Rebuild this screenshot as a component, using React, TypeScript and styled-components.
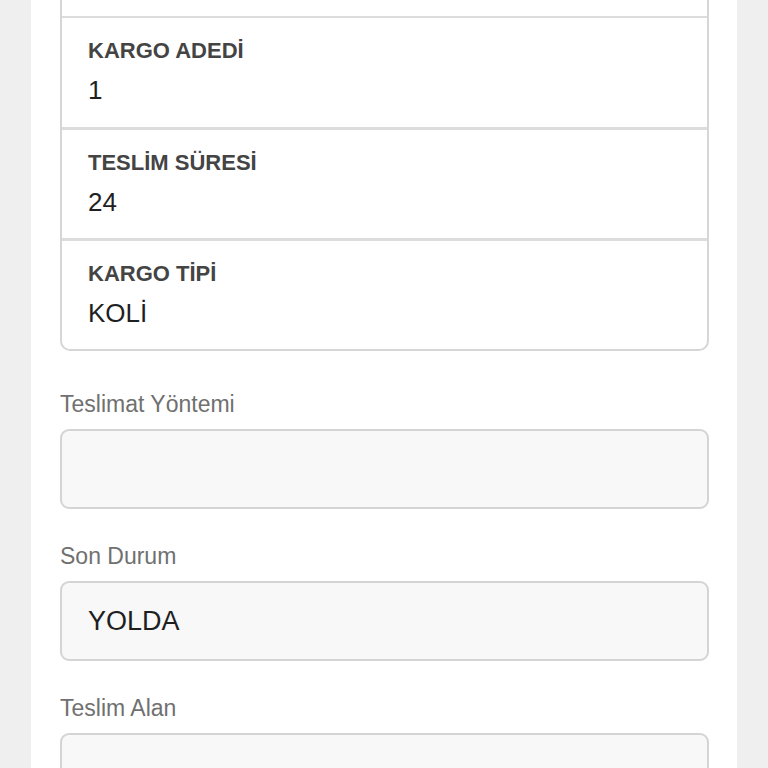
import React from "react";
import styled, { createGlobalStyle } from "styled-components";

const GlobalStyle = createGlobalStyle`
    html, body {
        margin: 0;
        padding: 0;
        background: #efefef;
        font-family: "Liberation Sans", Arial, Helvetica, sans-serif;
    }
`;

const Page = styled.div`
    margin: 0 31px;
    min-height: 768px;
    background: #ffffff;
    padding: 0 28px 0 29px;
    overflow: hidden;
`;

// the view is scrolled so that the first row of the card sits above the top edge
const Scrolled = styled.div`
    margin-top: -97px;
`;

const InfoCard = styled.div`
    border: 2px solid #d6d6d6;
    border-radius: 10px;
    background: #ffffff;
    overflow: hidden;
    margin-bottom: 40px;
`;

const InfoRow = styled.div<{ $sep: number }>`
    display: flex;
    flex-direction: column;
    gap: 11px;
    height: 111px;
    box-sizing: border-box;
    padding: 20px 26px 0;
    border-top: ${(p) => p.$sep}px solid #dcdcdc;

    &:first-child {
        border-top: none;
    }

    .info-label {
        font-size: 22px;
        font-weight: 700;
        color: #444444;
        line-height: 26px;
    }

    .info-value {
        font-size: 26px;
        color: #1f1f1f;
        line-height: 30px;
    }
`;

const Field = styled.div`
    display: flex;
    flex-direction: column;
    gap: 11px;
    margin-bottom: 34px;

    label {
        font-size: 23px;
        line-height: 27px;
        color: #707070;
    }
`;

const FieldBox = styled.div`
    height: 80px;
    box-sizing: border-box;
    display: flex;
    align-items: center;
    padding: 0 26px;
    background: #f8f8f8;
    border: 2px solid #d4d4d4;
    border-radius: 9px;
    font-size: 27px;
    color: #1f1f1f;
`;

const rows = [
    { label: "KARGO FİRMASI", value: "ARAS KARGO", sep: 0 },
    { label: "KARGO ADEDİ", value: "1", sep: 2 },
    { label: "TESLİM SÜRESİ", value: "24", sep: 3 },
    { label: "KARGO TİPİ", value: "KOLİ", sep: 3 },
];

const fields = [
    { label: "Teslimat Yöntemi", value: "" },
    { label: "Son Durum", value: "YOLDA" },
    { label: "Teslim Alan", value: "" },
];

export default function App() {
    return (
        <>
            <GlobalStyle />
            <Page>
                <Scrolled>
                    <InfoCard>
                        {rows.map((r) => (
                            <InfoRow key={r.label} $sep={r.sep}>
                                <span className="info-label">{r.label}</span>
                                <span className="info-value">{r.value}</span>
                            </InfoRow>
                        ))}
                    </InfoCard>
                    {fields.map((f) => (
                        <Field key={f.label}>
                            <label>{f.label}</label>
                            <FieldBox>{f.value}</FieldBox>
                        </Field>
                    ))}
                </Scrolled>
            </Page>
        </>
    );
}
